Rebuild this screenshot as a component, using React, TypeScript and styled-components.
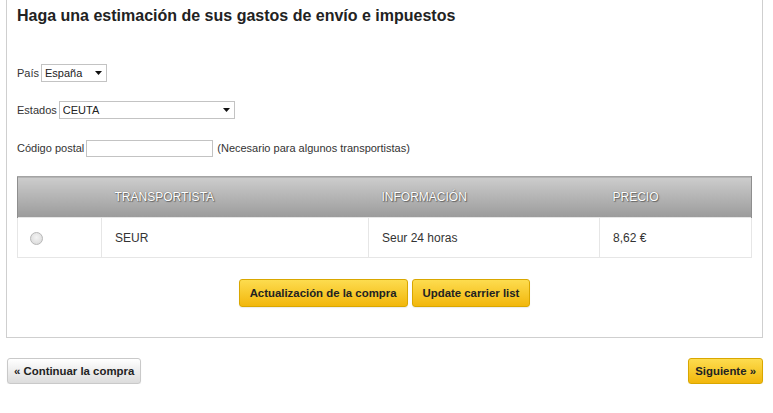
import styled, { createGlobalStyle } from 'styled-components';

const GlobalStyle = createGlobalStyle`
  html, body {
    margin: 0;
    padding: 0;
    background: #ffffff;
  }
  body {
    font-family: "Liberation Sans", Arial, sans-serif;
    color: #333;
  }
`;

const Page = styled.div`
  width: 773px;
  padding: 0 10px 0 6px;
  box-sizing: border-box;
`;

const Box = styled.div`
  border: 1px solid #cfcfcf;
  border-top: none;
  padding: 7px 10px 30px 10px;
`;

const Title = styled.h3`
  margin: 0 0 39px 0;
  font-size: 16px;
  line-height: 18px;
  font-weight: bold;
  color: #222;
`;

const Row = styled.div<{ $gap?: number }>`
  display: flex;
  align-items: center;
  gap: 2px;
  height: 18px;
  margin-bottom: ${(p) => p.$gap ?? 19}px;
  font-size: 11px;
  color: #333;
`;

const SelectWrap = styled.div<{ $w: number }>`
  position: relative;
  width: ${(p) => p.$w}px;
  height: 18px;
`;

const Select = styled.select`
  appearance: none;
  width: 100%;
  height: 100%;
  border: 1px solid #c3c3c3;
  border-radius: 0;
  background: #fff;
  font-family: "Liberation Sans", Arial, sans-serif;
  font-size: 11px;
  color: #222;
  padding: 0 0 0 3px;
  margin: 0;
  outline: none;
`;

const Arrow = styled.svg`
  position: absolute;
  right: 5px;
  top: 7px;
  pointer-events: none;
`;

const Input = styled.input`
  width: 127px;
  height: 17px;
  box-sizing: border-box;
  border: 1px solid #c3c3c3;
  padding: 0 2px;
  margin: 0;
  font-size: 11px;
`;

const Hint = styled.span`
  margin-left: 2px;
`;

const Table = styled.table`
  width: 100%;
  border-collapse: collapse;
  margin-top: -1px;
  font-size: 12px;
`;

const Th = styled.th<{ $w: number }>`
  width: ${(p) => p.$w}px;
  height: 41px;
  box-sizing: border-box;
  padding: 0 0 0 13px;
  text-align: left;
  font-weight: normal;
  color: #ffffff;
  text-shadow: 0 0 1px #555, 1px 1px 1px #666;
  text-transform: uppercase;
  background: linear-gradient(#cccccc, #9b9b9b);
  border-top: 1px solid #a4a4a4;
  &:first-child {
    border-left: 1px solid #8e8e8e;
  }
  &:last-child {
    border-right: 1px solid #8e8e8e;
  }
`;

const Td = styled.td<{ $pad?: number }>`
  height: 39px;
  padding: 0 0 0 ${(p) => p.$pad ?? 13}px;
  border: 1px solid #e6e6e6;
  color: #333;
`;

const Radio = styled.span`
  display: inline-block;
  width: 11px;
  height: 11px;
  border-radius: 50%;
  border: 1px solid #b8b8b8;
  background: radial-gradient(circle at 50% 40%, #f4f4f4, #d6d6d6);
  vertical-align: middle;
`;

const Actions = styled.div`
  display: flex;
  justify-content: center;
  gap: 4px;
  margin-top: 21px;
`;

const Button = styled.button<{ $grey?: boolean; $h?: number; $pad?: number }>`
  height: ${(p) => p.$h ?? 28}px;
  padding: 0 ${(p) => p.$pad ?? 10}px;
  border-radius: 3px;
  font-family: "Liberation Sans", Arial, sans-serif;
  font-size: 11.4px;
  font-weight: bold;
  color: #222;
  cursor: pointer;
  border: 1px solid ${(p) => (p.$grey ? '#c9c9c9' : '#d9a700')};
  background: ${(p) =>
    p.$grey
      ? 'linear-gradient(#ffffff, #dcdcdc)'
      : 'linear-gradient(#fddc4f, #f2b70c)'};
  box-shadow: 0 1px 1px rgba(0, 0, 0, 0.08);
`;

const Bottom = styled.div`
  display: flex;
  justify-content: space-between;
  margin-top: 20px;
  padding-left: 1px;
`;

const Caret = () => (
  <Arrow width="7" height="4" viewBox="0 0 7 4">
    <path d="M0 0 H7 L3.5 4 Z" fill="#111" />
  </Arrow>
);

export default function App() {
  return (
    <Page>
      <GlobalStyle />
      <Box>
        <Title>Haga una estimación de sus gastos de envío e impuestos</Title>
        <Row>
          <span>País</span>
          <SelectWrap $w={66}>
            <Select defaultValue="es">
              <option value="es">España</option>
            </Select>
            <Caret />
          </SelectWrap>
        </Row>
        <Row $gap={20}>
          <span>Estados</span>
          <SelectWrap $w={176}>
            <Select defaultValue="ceuta">
              <option value="ceuta">CEUTA</option>
            </Select>
            <Caret />
          </SelectWrap>
        </Row>
        <Row $gap={20}>
          <span>Código postal</span>
          <Input type="text" />
          <Hint>(Necesario para algunos transportistas)</Hint>
        </Row>
        <Table>
          <thead>
            <tr>
              <Th $w={84}></Th>
              <Th $w={267}>Transportista</Th>
              <Th $w={231}>Información</Th>
              <Th $w={152}>Precio</Th>
            </tr>
          </thead>
          <tbody>
            <tr>
              <Td $pad={12}>
                <Radio />
              </Td>
              <Td>SEUR</Td>
              <Td>Seur 24 horas</Td>
              <Td>8,62 €</Td>
            </tr>
          </tbody>
        </Table>
        <Actions>
          <Button>Actualización de la compra</Button>
          <Button>Update carrier list</Button>
        </Actions>
      </Box>
      <Bottom>
        <Button $grey $h={26} $pad={6}>« Continuar la compra</Button>
        <Button $h={26} $pad={6}>Siguiente »</Button>
      </Bottom>
    </Page>
  );
}
